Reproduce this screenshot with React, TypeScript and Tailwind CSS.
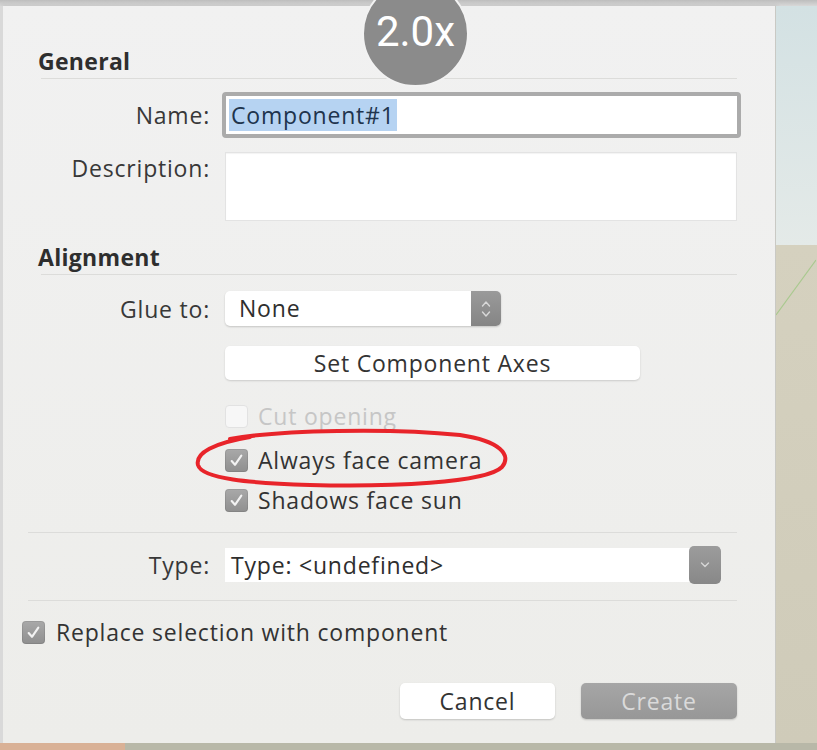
import React from "react";

const font = { fontFamily: '"Open Sans", "Liberation Sans", Arial, sans-serif' };

function Check({ checked = false, disabled = false }: { checked?: boolean; disabled?: boolean }) {
  if (disabled) {
    return <span className="block h-[23px] w-[23px] rounded-[4px] border border-[#e2e2e2] bg-[#f7f7f7]" />;
  }
  return (
    <span className="flex h-[23px] w-[23px] items-center justify-center rounded-[4px] bg-gradient-to-b from-[#a9a9a9] to-[#8f8f8f] shadow-[inset_0_0_0_1px_rgba(0,0,0,0.08)]">
      {checked && (
        <svg width="15" height="15" viewBox="0 0 14 14" fill="none">
          <path d="M2.5 7.5 L5.6 11 L11.5 2.5" stroke="#f2f2f2" strokeWidth="2" strokeLinecap="round" strokeLinejoin="round" />
        </svg>
      )}
    </span>
  );
}

function Label({ children }: { children: React.ReactNode }) {
  return <div className="w-[207px] shrink-0 text-right text-[23px] leading-[28px] tracking-[0.8px] text-[#383838]">{children}</div>;
}

function Rule({ left }: { left: number }) {
  return <div className={`h-px bg-[#dcdcda] ${left === 38 ? "ml-[38px]" : "ml-[25px]"} mr-[38px]`} />;
}

export default function App() {
  return (
    <div className="relative flex h-[750px] w-[817px] flex-col overflow-hidden bg-[#d4d0be]" style={font}>
      <div className="h-[6px] bg-gradient-to-b from-[#bdbdbd] to-[#d8d8d8]" />

      <div className="flex flex-1">
        {/* dialog */}
        <div className="w-[776px] shrink-0 border-l-[3px] border-r border-l-[#d9d9d9] border-r-[#c9c9c4] bg-gradient-to-b from-[#f1f1f1] to-[#ededea] pt-[41px] shadow-[2px_0_4px_rgba(0,0,0,0.12)]">
          <div className="ml-[35px] h-[28px] text-[23px] font-bold leading-[28px] tracking-[0.3px] text-[#2e2e2e]">General</div>
          <div className="mt-[3px]"><Rule left={38} /></div>

          <div className="mt-[13px] flex items-center">
            <Label>Name:</Label>
            <div className="ml-[12px] h-[46px] w-[519px] rounded-[4px] border-[4px] border-[#ababab] bg-white p-[3px]">
              <span className="inline-block h-full bg-[#b6d3f2] px-[2px] text-[23px] leading-[32px] tracking-[0.8px] text-[#20344d]">Component#1</span>
            </div>
          </div>

          <div className="mt-[14px] flex items-start">
            <div className="pt-[2px]"><Label>Description:</Label></div>
            <div className="ml-[15px] h-[69px] w-[512px] border border-[#e3e3e3] bg-white shadow-[inset_0_1px_1px_rgba(0,0,0,0.05)]" />
          </div>

          <div className="ml-[35px] mt-[22px] h-[28px] text-[23px] font-bold leading-[28px] tracking-[0.3px] text-[#2e2e2e]">Alignment</div>
          <div className="mt-[3px]"><Rule left={38} /></div>

          <div className="mt-[16px] flex items-center">
            <Label>Glue to:</Label>
            <div className="ml-[15px] flex h-[35px] w-[276px] rounded-[5px] bg-white shadow-[0_1px_2px_rgba(0,0,0,0.18)]">
              <span className="flex-1 pl-[14px] text-[23px] leading-[35px] tracking-[0.8px] text-[#2e2e2e]">None</span>
              <span className="flex w-[30px] items-center justify-center rounded-r-[5px] bg-gradient-to-b from-[#9a9a9a] to-[#858585]">
                <svg width="12" height="22" viewBox="0 0 12 22" fill="none">
                  <path d="M2.5 8 L6 4 L9.5 8" stroke="#d8d8d8" strokeWidth="1.4" strokeLinecap="round" strokeLinejoin="round" />
                  <path d="M2.5 14 L6 18 L9.5 14" stroke="#d8d8d8" strokeWidth="1.4" strokeLinecap="round" strokeLinejoin="round" />
                </svg>
              </span>
            </div>
          </div>

          <div className="ml-[222px] mt-[20px] flex h-[34px] w-[415px] items-center justify-center rounded-[5px] bg-white text-[23px] tracking-[0.8px] text-[#333] shadow-[0_1px_2px_rgba(0,0,0,0.15)]">
            Set Component Axes
          </div>

          <div className="ml-[222px] mt-[22px] flex h-[28px] items-center gap-[10px] text-[23px] tracking-[0.8px]">
            <Check disabled />
            <span className="text-[#c6c6c6]">Cut opening</span>
          </div>
          <div className="ml-[222px] mt-[16px] flex h-[28px] items-center gap-[10px] text-[23px] tracking-[0.8px]">
            <Check checked />
            <span className="text-[#333]">Always face camera</span>
          </div>
          <div className="ml-[222px] mt-[12px] flex h-[28px] items-center gap-[10px] text-[23px] tracking-[0.8px]">
            <Check checked />
            <span className="text-[#333]">Shadows face sun</span>
          </div>

          <div className="mt-[18px]"><Rule left={25} /></div>

          <div className="mt-[15px] flex items-center">
            <Label>Type:</Label>
            <div className="ml-[15px] flex h-[34px] w-[496px] items-stretch bg-white">
              <span className="flex-1 pl-[6px] text-[23px] leading-[34px] tracking-[0.8px] text-[#2e2e2e]">Type: &lt;undefined&gt;</span>
              <span className="-my-[2px] flex w-[32px] items-center justify-center rounded-[5px] bg-gradient-to-b from-[#9c9c9c] to-[#888]">
                <svg width="12" height="8" viewBox="0 0 12 8" fill="none">
                  <path d="M2.5 2 L6 5.5 L9.5 2" stroke="#d6d6d6" strokeWidth="1.4" strokeLinecap="round" strokeLinejoin="round" />
                </svg>
              </span>
            </div>
          </div>

          <div className="mt-[18px]"><Rule left={25} /></div>

          <div className="ml-[19px] mt-[17px] flex h-[28px] items-center gap-[11px] text-[23px] tracking-[0.8px]">
            <Check checked />
            <span className="text-[#333]">Replace selection with component</span>
          </div>

          <div className="mt-[37px] flex justify-end gap-[26px] pr-[38px] text-[23px] tracking-[0.8px]">
            <div className="flex h-[36px] w-[155px] items-center justify-center rounded-[5px] bg-white text-[#333] shadow-[0_1px_2px_rgba(0,0,0,0.18)]">
              Cancel
            </div>
            <div className="flex h-[36px] w-[156px] items-center justify-center rounded-[5px] bg-gradient-to-b from-[#a6a6a6] to-[#979797] text-[#dadada] shadow-[0_1px_2px_rgba(0,0,0,0.18)]">
              Create
            </div>
          </div>
        </div>

        {/* scene behind dialog */}
        <div className="flex flex-1 flex-col">
          <div className="h-[239px] bg-gradient-to-b from-[#d3e1e3] to-[#e4eae8]" />
          <div className="relative flex-1 bg-gradient-to-b from-[#d5d1bf] to-[#cfcbb9]">
            <svg className="absolute inset-0" width="40" height="498" viewBox="0 0 40 498">
              <path d="M0 70 L40 15" stroke="#a9c98f" strokeWidth="1.2" />
            </svg>
          </div>
        </div>
      </div>

      <div className="flex h-[7px]">
        <div className="w-[125px] bg-[#d9b196]" />
        <div className="flex-1 bg-[#b8b8a8]" />
      </div>

      {/* zoom badge */}
      <div className="absolute left-[362px] top-[-20px] flex h-[107px] w-[107px] items-end justify-center rounded-full border-2 border-[#f2f2f2] bg-[#8b8b8b] pb-[32px]">
        <span className="text-[42px] leading-none text-white" style={{ fontFamily: "Roboto, sans-serif" }}>2.0x</span>
      </div>

      {/* red annotation */}
      <svg className="pointer-events-none absolute left-[190px] top-[425px]" width="325" height="66" viewBox="0 0 325 66" fill="none">
        <path
          d="M40 14 C90 5 200 3 270 10 C310 16 322 30 312 42 C296 58 200 62 120 60 C60 58 12 54 8 40 C5 28 24 18 60 12"
          stroke="#e8242a"
          strokeWidth="4"
          strokeLinecap="round"
        />
      </svg>
    </div>
  );
}
